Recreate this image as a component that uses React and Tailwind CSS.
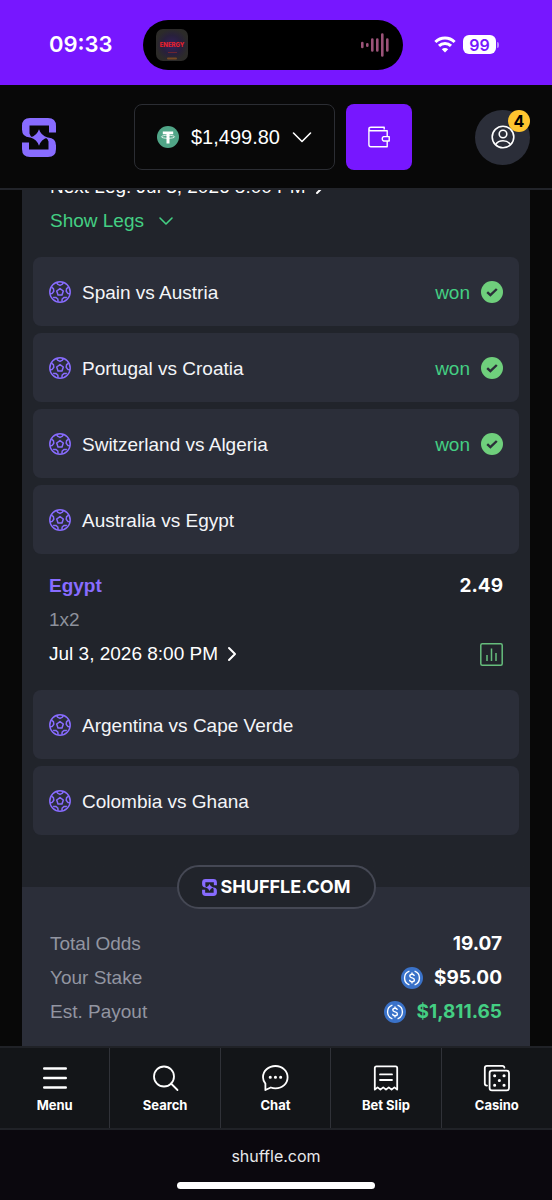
import clsx from "clsx";

const legs = [
  { id: 1, match: "Spain vs Austria", won: true },
  { id: 2, match: "Portugal vs Croatia", won: true },
  { id: 3, match: "Switzerland vs Algeria", won: true },
  {
    id: 4,
    match: "Australia vs Egypt",
    pick: { team: "Egypt", market: "1x2", odds: "2.49", time: "Jul 3, 2026 8:00 PM" },
  },
  { id: 5, match: "Argentina vs Cape Verde" },
  { id: 6, match: "Colombia vs Ghana" },
];

const ShuffleMark = ({ className }) => (
  <svg viewBox="0 0 34 39" className={className} fill="#886cff" aria-hidden="true">
    <path d="M34 14.5H27V7.5H7.5V15.5Q8 18 10.5 19.5H8Q0 19 0 11.5V8Q0 0 8 0H26Q34 0 34 8Z" />
    <path d="M0 24.5H7V31.5H26.5V23.5Q26 21 23.5 19.5H26Q34 20 34 27.5V31Q34 39 26 39H8Q0 39 0 31Z" />
    <path d="M17 11.2Q19 17.5 25.6 19.5Q19 21.5 17 27.8Q15 21.5 8.4 19.5Q15 17.5 17 11.2Z" />
  </svg>
);

const Chevron = ({ d, className, width = 1.6 }) => (
  <svg
    viewBox="0 0 20 20"
    className={className}
    fill="none"
    stroke="currentColor"
    strokeWidth={width}
    strokeLinecap="round"
    strokeLinejoin="round"
    aria-hidden="true"
  >
    <path d={d} />
  </svg>
);

const BallIcon = () => (
  <svg
    viewBox="0 0 22 22"
    className="size-[22px] shrink-0"
    fill="none"
    stroke="#886cff"
    strokeWidth="1.5"
    strokeLinejoin="round"
    aria-hidden="true"
  >
    <circle cx="11" cy="11" r="10.2" />
    <path d="M11 7.6L14.3 10L13 13.9H9L7.7 10Z" />
    <path d="M7.6 1.6L8.6 3.2L11 4.4L13.4 3.2L14.4 1.6" />
    <path d="M19.6 6.2L17.6 7.6L17.2 10.2L18.8 12.4L21 12.8" />
    <path d="M2.4 6.2L4.4 7.6L4.8 10.2L3.2 12.4L1 12.8" />
    <path d="M12.9 20.6L13.2 18L15.2 16.4L17.9 16.6" />
    <path d="M9.1 20.6L8.8 18L6.8 16.4L4.1 16.6" />
  </svg>
);

const CheckBadge = () => (
  <svg viewBox="0 0 22 22" className="size-[22px]" aria-hidden="true">
    <circle cx="11" cy="11" r="11" fill="#6fcf7c" />
    <path d="M6.2 11.2L9.4 14.2L15.8 8" fill="none" stroke="#2b2e39" strokeWidth="2.4" />
  </svg>
);

const UsdcIcon = () => (
  <svg viewBox="0 0 22 22" className="size-[22px]" fill="none" stroke="#fff" strokeWidth="1.4" aria-hidden="true">
    <circle cx="11" cy="11" r="11" fill="#3a72c9" stroke="none" />
    <path d="M8.4 4.2A7.2 7.2 0 0 0 8.4 17.8M13.6 4.2A7.2 7.2 0 0 1 13.6 17.8" />
    <path d="M13.3 9C13.1 7.7 12.3 7.2 11 7.2C9.6 7.2 8.8 8 8.8 9C8.8 11.6 13.4 10.3 13.4 13C13.4 14.1 12.4 14.8 11 14.8C9.6 14.8 8.7 14.1 8.6 12.8M11 5.6V7.2M11 14.8V16.4" />
  </svg>
);

const TetherIcon = () => (
  <svg viewBox="0 0 22 22" className="size-[22px]" aria-hidden="true">
    <circle cx="11" cy="11" r="11" fill="#50a587" />
    <path d="M5.8 5.4H16.2V8.2H12.5V17.4H9.5V8.2H5.8Z" fill="#fff" />
    <ellipse cx="11" cy="10.8" rx="6.6" ry="1.5" fill="none" stroke="#fff" strokeWidth="0.8" />
  </svg>
);

const StatusBar = () => (
  <div className="grid h-[85px] grid-cols-[1fr_auto_1fr] items-center bg-[#7717ff] pt-1 font-['Inter',sans-serif] text-white">
    <span className="pl-[49px] text-[22px] font-semibold">09:33</span>
    <div className="mr-1.5 flex h-[50px] w-[260px] items-center justify-between rounded-full bg-black px-[13px]">
      <svg viewBox="0 0 32 32" className="size-8" aria-hidden="true">
        <defs>
          <radialGradient id="cover">
            <stop offset="0" stopColor="#33205c" />
            <stop offset="0.6" stopColor="#28203c" />
            <stop offset="1" stopColor="#2c2b29" />
          </radialGradient>
        </defs>
        <rect width="32" height="32" rx="7" fill="url(#cover)" />
        <path d="M12 29.5H20" stroke="#94581f" strokeWidth="2" strokeLinecap="round" opacity="0.7" />
        <path d="M12 23.5H21" stroke="#6b2430" />
        <text x="16" y="18" textAnchor="middle" fontSize="6" fontWeight="800" fill="#e5202c">
          ENERGY
        </text>
      </svg>
      <svg viewBox="0 0 30 26" className="h-[26px] w-[30px]" stroke="#9b5378" strokeWidth="2.6" strokeLinecap="round" aria-hidden="true">
        <path d="M2.3 11V15M7.3 12.2V13.8M12.3 7.5V18.5M17.3 7.5V18.5M22.3 2.5V23.5M27.3 7.5V18.5" />
      </svg>
    </div>
    <div className="flex items-center pl-[25px]">
      <svg viewBox="0 0 22 17" className="h-[17px] w-[22px] shrink-0" fill="none" stroke="#fff" strokeWidth="3" aria-hidden="true">
        <path d="M1.4 6A13.6 13.6 0 0 1 20.6 6" />
        <path d="M5 9.9A8.6 8.6 0 0 1 17 9.9" />
        <path d="M7.8 13.2A4.6 4.6 0 0 1 14.2 13.2L11 16.5Z" fill="#fff" stroke="none" />
      </svg>
      <span className="ml-[7px] flex h-[19px] w-[33px] shrink-0 items-center justify-center rounded-md bg-white text-base font-semibold text-[#7717ff]">
        99
      </span>
      <span className="ml-px h-1.5 w-0.5 rounded-r-full bg-[#b98aff]" />
    </div>
  </div>
);

const Header = () => (
  <header className="relative z-10 grid grid-cols-[1fr_auto_1fr] items-center border-b-2 border-[#22242a] bg-[#080808] px-[22px] pt-[19px] pb-[18px]">
    <a href="#home" aria-label="Shuffle home">
      <ShuffleMark className="h-[39px] w-[34px]" />
    </a>
    <div className="mr-1.5 flex gap-[11px]">
      <button className="flex h-[66px] w-[201px] items-center gap-3 rounded-lg border border-[#2b2d33] pl-[22px] text-xl text-white">
        <TetherIcon />
        $1,499.80
        <Chevron d="M1.5 6L10 14.5L18.5 6" className="size-5" />
      </button>
      <button
        aria-label="Wallet"
        className="flex size-[66px] items-center justify-center rounded-lg bg-[#7717ff] text-white"
      >
        <svg viewBox="0 0 22 22" className="size-[22px]" fill="none" stroke="currentColor" strokeWidth="1.4" strokeLinejoin="round" aria-hidden="true">
          <path d="M16.2 3.4V1.2H3Q0.9 1.2 0.9 3V18.6Q0.9 20.8 3 20.8H19.2V15M19.2 10.6V4.8H3Q0.9 4.8 0.9 3" />
          <path d="M21.2 10.6H15.6Q14.2 11.2 14.2 12.8Q14.2 14.4 15.6 15H21.2Z" />
        </svg>
      </button>
    </div>
    <button
      aria-label="Account, 4 notifications"
      className="relative flex size-[55px] items-center justify-center justify-self-end rounded-full bg-[#2b2e39] text-white"
    >
      <svg viewBox="0 0 24 24" className="size-6" fill="none" stroke="currentColor" strokeWidth="1.6" aria-hidden="true">
        <circle cx="12" cy="12" r="10.8" />
        <circle cx="12" cy="9" r="3.8" />
        <path d="M4.6 19.6Q7 15.8 12 15.8Q17 15.8 19.4 19.6" />
      </svg>
      <span className="absolute top-0 right-0 flex size-[22px] items-center justify-center rounded-full bg-[#ffc52f] font-['Inter',sans-serif] text-base font-bold text-black">
        4
      </span>
    </button>
  </header>
);

const Leg = ({ leg }) => (
  <li>
    <div className="flex h-[69px] items-center rounded-lg bg-[#2b2e39] px-4">
      <BallIcon />
      <span className="ml-[11px] grow pt-1 text-[#f4f5f8]">{leg.match}</span>
      {leg.won && (
        <span className="flex items-center gap-[11px] text-[#44cf83]">
          <span className="pt-1">won</span>
          <CheckBadge />
        </span>
      )}
    </div>
    {leg.pick && (
      <div className="flex justify-between px-4 pt-[15px] pb-3 leading-[34px]">
        <div>
          <p className="font-bold text-[#886cff]">{leg.pick.team}</p>
          <p className="text-[#8d919c]">{leg.pick.market}</p>
          <a href="#event" className="flex items-center gap-1 text-white">
            {leg.pick.time}
            <Chevron d="M7 4L13 10L7 16" className="size-5" width={2} />
          </a>
        </div>
        <div className="flex flex-col items-end justify-between">
          <span className="font-['Inter',sans-serif] font-bold text-white">{leg.pick.odds}</span>
          <button aria-label="Match statistics" className="flex h-[34px] items-center">
            <svg viewBox="0 0 23 23" className="size-[23px]" fill="none" stroke="#66bd7c" strokeWidth="1.5" aria-hidden="true">
              <rect x="0.8" y="0.8" width="21.4" height="21.4" rx="1.5" />
              <path d="M7 12V18M11.5 5.5V18M16 10V18" />
            </svg>
          </button>
        </div>
      </div>
    )}
  </li>
);

const SummaryRow = ({ label, value, coin, green }) => (
  <div className="flex items-center justify-between">
    <dt className="text-[#9295a1]">{label}</dt>
    <dd
      className={clsx(
        "flex items-center gap-[11px] font-['Inter',sans-serif] font-bold",
        green ? "text-[#44cf83]" : "text-white"
      )}
    >
      {coin && <UsdcIcon />}
      {value}
    </dd>
  </div>
);

const navItems = [
  {
    label: "Menu",
    icon: <path d="M3.2 4.5H24.8M3.2 14H24.8M3.2 23.5H24.8" strokeWidth="2.4" />,
  },
  {
    label: "Search",
    icon: (
      <>
        <circle cx="13" cy="12.5" r="10" />
        <path d="M20 19.5L26.5 26" />
      </>
    ),
  },
  {
    label: "Chat",
    icon: (
      <>
        <path d="M4.4 26V19.6C2.8 17.8 2 15.6 2 13.3C2 7 7.4 2 14.5 2C21.5 2 26.6 7 26.6 13.3C26.6 19.6 21.5 24.4 14.5 24.4C12.8 24.4 11.2 24.1 9.8 23.5Z" />
        <path d="M9.2 13.3H9.3M14.4 13.3H14.5M19.6 13.3H19.7" strokeWidth="3" />
      </>
    ),
  },
  {
    label: "Bet Slip",
    icon: (
      <>
        <path d="M2.8 25.6V4Q2.8 2.4 4.4 2.4H23.6Q25.2 2.4 25.2 4V25.6L22.4 23.4L19.6 25.6L16.8 23.4L14 25.6L11.2 23.4L8.4 25.6L5.6 23.4Z" />
        <path d="M8 10.4H20M8 16H20" />
      </>
    ),
  },
  {
    label: "Casino",
    icon: (
      <>
        <rect x="6.6" y="6.6" width="19.4" height="19.8" rx="2.4" />
        <path d="M4 21.6Q1.8 21.4 1.8 19.4V4Q1.8 1.8 4 1.8H19.4Q21.2 1.8 21.4 3.6" />
        <path d="M11.6 11.8H11.7M21 11.8H21.1M16.3 16.5H16.4M11.6 21.2H11.7M21 21.2H21.1" strokeWidth="3" />
      </>
    ),
  },
];

const BottomNav = () => (
  <nav className="grid grid-cols-5 border-y-2 border-[#202227] bg-[#131518] text-white">
    {navItems.map((item) => (
      <a
        key={item.label}
        href={"#" + item.label}
        className="flex h-20 flex-col items-center gap-[3px] border-r border-[#303238] pt-4 font-['Inter',sans-serif] text-[13px] leading-5 font-bold last:border-r-0"
      >
        <svg
          viewBox="0 0 28 28"
          className="size-7"
          fill="none"
          stroke="currentColor"
          strokeWidth="1.8"
          strokeLinecap="round"
          strokeLinejoin="round"
          aria-hidden="true"
        >
          {item.icon}
        </svg>
        {item.label}
      </a>
    ))}
  </nav>
);

const App = () => {
  return (
    <div className="flex min-h-screen flex-col bg-[#080808] font-['Liberation_Sans',Arial,sans-serif]">
      <StatusBar />
      <Header />

      {/* Bet card, scrolled partly under the header */}
      <main className="-mt-5 flex grow flex-col px-[22px] text-[19px]">
        <section className="flex grow flex-col bg-[#21242b]">
          <div className="px-7 leading-[34px]">
            <p className="flex items-center gap-1 text-white">
              Next Leg: Jul 3, 2026 8:00 PM
              <Chevron d="M7 4L13 10L7 16" className="size-5" width={2} />
            </p>
            <button className="flex items-center gap-3 text-[#44cf83]">
              Show Legs
              <Chevron d="M4 7L10 13L16 7" className="size-5" />
            </button>
          </div>

          <ul className="flex flex-col gap-[7px] px-[11px] pt-[19px] pb-[30px]">
            {legs.map((leg) => (
              <Leg key={leg.id} leg={leg} />
            ))}
          </ul>

          <div className="grow bg-linear-to-b from-[#21242b] from-[22px] to-[#2b2e39] to-[22px] pb-[17px]">
            <div className="mx-auto flex h-11 w-[199px] items-center justify-center gap-1 rounded-full border-2 border-[#454854] bg-[#21242b] font-['Inter',sans-serif] text-lg font-bold text-white">
              <ShuffleMark className="h-[17px] w-[15px]" />
              SHUFFLE.COM
            </div>
            <dl className="px-7 pt-[18px] leading-[34px]">
              <SummaryRow label="Total Odds" value="19.07" />
              <SummaryRow label="Your Stake" value="$95.00" coin />
              <SummaryRow label="Est. Payout" value="$1,811.65" coin green />
            </dl>
          </div>
        </section>
      </main>

      <BottomNav />
      <footer className="flex h-[70px] flex-col items-center justify-between bg-[#0b080e] pt-[14px] pb-[11px] font-['Inter',sans-serif] text-base leading-6 text-[#e8e8ea]">
        shuffle.com
        <span className="h-[7px] w-[198px] rounded-full bg-white" />
      </footer>
    </div>
  );
};

export default App;
